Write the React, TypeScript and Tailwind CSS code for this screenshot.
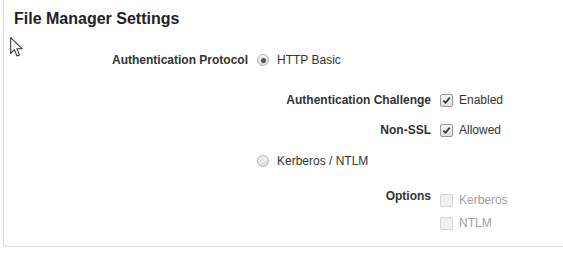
import React from "react";

const Radio = ({ checked }: { checked?: boolean }) => (
  <span className="flex h-3 w-3 shrink-0 items-center justify-center rounded-full border border-[#b4b4b4] bg-gradient-to-b from-[#f4f4f4] to-[#dcdcdc]">
    {checked && <span className="h-[5px] w-[5px] rounded-full bg-[#555]" />}
  </span>
);

const Check = ({ checked, disabled }: { checked?: boolean; disabled?: boolean }) => (
  <span
    className={
      "flex h-[13px] w-[13px] shrink-0 items-center justify-center rounded-[2px] border " +
      (disabled
        ? "border-[#d8d8d8] bg-[#f0f0f0]"
        : "border-[#9a9a9a] bg-gradient-to-b from-[#f6f6f6] to-[#dedede]")
    }
  >
    {checked && (
      <svg viewBox="0 0 10 10" className="h-[9px] w-[9px]">
        <path d="M1.5 5.2 L4 7.6 L8.6 1.8" fill="none" stroke="#333" strokeWidth="1.9" />
      </svg>
    )}
  </span>
);

const SubRow = ({
  label,
  children,
  className = "",
}: {
  label: string;
  children: React.ReactNode;
  className?: string;
}) => (
  <div className={"flex gap-[9px] " + className}>
    <div className="w-[174px] shrink-0 text-right font-bold leading-5 text-[#333]">{label}</div>
    <div className="flex flex-col">{children}</div>
  </div>
);

const Opt = ({
  text,
  checked,
  disabled,
}: {
  text: string;
  checked?: boolean;
  disabled?: boolean;
}) => (
  <div className="flex h-5 items-center gap-[6px]">
    <Check checked={checked} disabled={disabled} />
    <span className={disabled ? "text-[#a0a0a0]" : "text-[#333]"}>{text}</span>
  </div>
);

export default function App() {
  return (
    <div
      className="relative h-[254px] w-[563px] overflow-hidden bg-white text-[12px]"
      style={{ fontFamily: '"Liberation Sans", Arial, sans-serif' }}
    >
      <div className="ml-[3px] h-[247px] rounded-bl-[3px] border-b border-l border-[#d3dbe3] pl-[10px] pt-[9px]">
        <h2 className="text-[16px] font-bold leading-5 text-[#222]">File Manager Settings</h2>

        <div className="mt-[21px] flex gap-[9px]">
          <div className="w-[234px] shrink-0 text-right font-bold leading-5 text-[#333]">
            Authentication Protocol
          </div>
          <div className="flex flex-col">
            <div className="flex h-5 items-center gap-2">
              <Radio checked />
              <span className="text-[#333]">HTTP Basic</span>
            </div>

            <SubRow label="Authentication Challenge" className="mt-5">
              <Opt text="Enabled" checked />
            </SubRow>
            <SubRow label="Non-SSL" className="mt-[10px]">
              <Opt text="Allowed" checked />
            </SubRow>

            <div className="mt-[11px] flex h-5 items-center gap-2">
              <Radio />
              <span className="text-[#333]">Kerberos / NTLM</span>
            </div>

            <div className="mt-[19px] flex gap-[9px]">
              <div className="-mt-1 w-[174px] shrink-0 text-right font-bold leading-5 text-[#333]">
                Options
              </div>
              <div className="flex flex-col gap-[3px]">
                <Opt text="Kerberos" disabled />
                <Opt text="NTLM" disabled />
              </div>
            </div>
          </div>
        </div>
      </div>

      <svg
        className="absolute left-[10px] top-[37px]"
        width="14"
        height="20"
        viewBox="0 0 13 19"
      >
        <path
          d="M0.5 0.5 L0.5 15.5 L4 12 L6.5 18 L8.8 17 L6.4 11.2 L11.5 11.2 Z"
          fill="#fff"
          stroke="#333"
          strokeWidth="1"
          strokeLinejoin="round"
        />
      </svg>
    </div>
  );
}
